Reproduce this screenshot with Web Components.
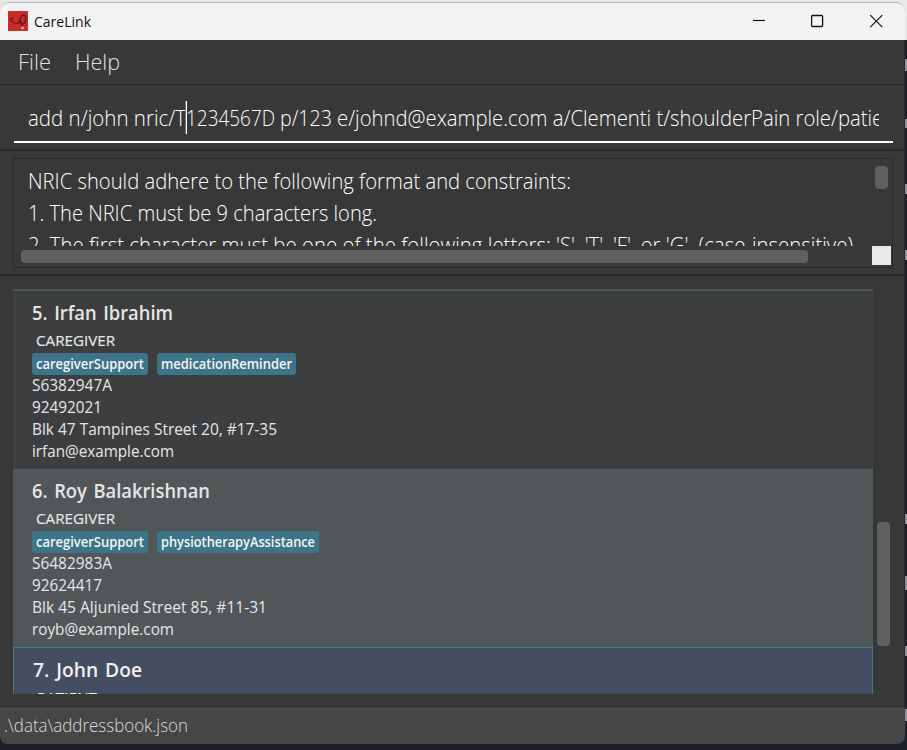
<!DOCTYPE html>
<html lang="en">
<head>
<meta charset="utf-8">
<title>CareLink</title>
<style>
html,body{margin:0;height:100%;overflow:hidden;background:#1d2028}
body{font-family:"Open Sans","Noto Sans",sans-serif;color:#fff}
</style>
</head>
<body>
<care-window></care-window>
<script>
const define = (name, html, setup) => {
  const t = document.createElement('template');
  t.innerHTML = html;
  customElements.define(name, class extends HTMLElement {
    constructor() { super(); this.attachShadow({mode:'open'}).append(t.content.cloneNode(true)); }
    connectedCallback() { if (setup) setup(this, this.shadowRoot); }
  });
};

/* Single line of text condensed or widened to a given width */
define('fit-text', `<style>
:host{display:block;white-space:pre;flex:none}
span{display:inline-block;transform-origin:0 50%}
</style><span><slot></slot></span>`, (el, root) => {
  const w = +el.getAttribute('w');
  el.style.width = w + 'px';
  const s = root.querySelector('span');
  s.style.transform = `scaleX(${w / s.getBoundingClientRect().width})`;
});

define('title-bar', `<style>
:host{display:flex;align-items:center;height:37px;background:#f3f3f3;color:#111;font-size:14.6px;padding-left:8px;border-top:1px solid #b5b5b5;border-radius:9px 9px 0 0;}
.logo{margin:-1px 6px 0 0;display:block}
.buttons{display:flex;margin-left:auto;padding-right:0}
.buttons svg{display:block;width:58.5px;height:37px}
fit-text{line-height:34px;height:36px}
</style>
<svg class="logo" width="20" height="20" viewBox="0 0 20 20"><rect width="20" height="20" fill="#c92b2b"/><path d="M2.5 7.5c.5 3 4 5 6.500 5c3-.5 3-3 3.500-5.500c.8-3 4-4 5-1.500c1 3-.5 7-3 7.500c-2.500-.5-3-4-1.500-6.500M2.500 8l3-1M11.500 11l3 4" fill="none" stroke="#5c171b" stroke-width="1.200"/><circle cx="14.500" cy="17" r="1.400" fill="#c9a6a4"/></svg>
<fit-text w="57">CareLink</fit-text>
<div class="buttons">
<svg viewBox="0 0 58.5 37"><path d="M23 17.500h12" stroke="#111" stroke-width="1.200"/></svg>
<svg viewBox="0 0 58.5 37"><rect x="23.600" y="12.500" width="11" height="11" rx="1" fill="none" stroke="#111" stroke-width="1.300"/></svg>
<svg viewBox="0 0 58.5 37"><path d="M23.300 12.200l12 12m0-12l-12 12" stroke="#111" stroke-width="1.200"/></svg>
</div>`);

define('menu-bar', `<style>
:host{display:flex;height:44px;box-sizing:border-box;gap:24px;padding-left:18px;line-height:43px;font-size:21.7px;font-weight:300;color:#e2e2e2}
</style><fit-text w="33">File</fit-text><fit-text w="45">Help</fit-text>`);

define('command-box', `<style>
:host{display:block;position:relative;height:65px;box-sizing:border-box;border-top:1px solid #2b2b2b;padding:9px 11px 0 14px}
.field{height:47px;border-bottom:2px solid;border-image:linear-gradient(#8b8b8b 50%,#fff 50%) 2;padding:0 14px 0 14px}
.clip{display:flex;overflow:hidden;height:47px;line-height:47px;font-size:21.7px;font-weight:300}
.caret{position:absolute;left:185px;top:16px;width:2px;height:33px;background:linear-gradient(90deg,#777 50%,#fff 50%)}
</style>
<div class="field"><div class="clip"><fit-text w="158">add n/john nric/T</fit-text><fit-text w="94">1234567D </fit-text><fit-text w="57">p/123 </fit-text><fit-text w="565">e/johnd@example.com a/Clementi t/shoulderPain role/patient</fit-text></div></div><div class="caret"></div>`);

define('result-box', `<style>
:host{display:block;height:125px;box-sizing:border-box;border-top:2px solid #2b2b2b;padding:7px 11px 0 13px;}
.frame{box-sizing:border-box;height:110px;border:1px solid #2b2b2b;display:grid;grid-template-columns:858px 1fr;grid-template-rows:87px 1fr}
.text{overflow:hidden;padding:6px 0 0 14px;font-size:21.7px;font-weight:300;line-height:32px;box-sizing:border-box}
.v{width:13px;height:23px;border-radius:4px;background:#606060;margin:7px 0 0 3px}
.h{width:787px;height:13px;border-radius:4px;background:#606060;margin:4px 0 0 7px}
.corner{width:19px;height:19px;background:#e8e8e8}
</style>
<div class="frame"><div class="text"><fit-text w="543">NRIC should adhere to the following format and constraints:</fit-text><fit-text w="349">1. The NRIC must be 9 characters long.</fit-text><fit-text w="825">2. The first character must be one of the following letters: 'S', 'T', 'F', or 'G'. (case-insensitive)</fit-text></div><div class="v"></div><div class="h"></div><div class="corner"></div></div>`);

define('tag-chip', `<style>
:host{display:block;box-sizing:border-box;height:22px;line-height:21px;padding:0 4px;border-radius:3px;background:#3e7489;color:#f4f4f4;font-size:13.8px;font-weight:600}
</style><slot></slot>`);

define('person-card', `<style>
:host{display:block;box-sizing:border-box;height:178px;padding:7px 0 0 19px;background:#3c3e3f;color:#e6e6e6;font-size:15.8px;line-height:22px}
:host([alt]){background:#515658}
:host([first]){height:180px;border-top:2px solid #4e5557}
:host([selected]){background:#444e60;border:1px solid #3e7b91;color:#f0f0f0}
.name{font-size:19.6px;font-weight:600;line-height:30px;height:32px;word-spacing:2px}
.role{font-size:15.3px;padding-left:4px;height:23px;line-height:21px;-webkit-text-stroke:.2px}
.tags{display:flex;gap:9px;height:21px}
</style>
<div class="name"><slot name="name"></slot></div><div class="role"><slot name="role"></slot></div><div class="tags"><slot name="tag"></slot></div><slot></slot>`);

define('person-list', `<style>
:host{display:flex;height:432px;box-sizing:border-box;border-top:2px solid #2b2b2b;padding:13px 0 0 13px}
.list{width:860px;height:405px;overflow:hidden}
.thumb{width:13px;height:124px;border-radius:4px;background:#606060;margin:233px 0 0 4px}
</style>
<div class="list">
<person-card first><fit-text slot="name" w="141">5. Irfan Ibrahim</fit-text><fit-text slot="role" w="79">CAREGIVER</fit-text><tag-chip slot="tag"><fit-text w="108">caregiverSupport</fit-text></tag-chip><tag-chip slot="tag"><fit-text w="131">medicationReminder</fit-text></tag-chip><fit-text w="80">S6382947A</fit-text><fit-text w="70">92492021</fit-text><fit-text w="245">Blk 47 Tampines Street 20, #17-35</fit-text><fit-text w="142">irfan@example.com</fit-text></person-card>
<person-card alt><fit-text slot="name" w="178">6. Roy Balakrishnan</fit-text><fit-text slot="role" w="79">CAREGIVER</fit-text><tag-chip slot="tag"><fit-text w="108">caregiverSupport</fit-text></tag-chip><tag-chip slot="tag"><fit-text w="154">physiotherapyAssistance</fit-text></tag-chip><fit-text w="80">S6482983A</fit-text><fit-text w="70">92624417</fit-text><fit-text w="235">Blk 45 Aljunied Street 85, #11-31</fit-text><fit-text w="142">royb@example.com</fit-text></person-card>
<person-card selected><fit-text slot="name" w="109">7. John Doe</fit-text><fit-text slot="role" w="60">PATIENT</fit-text></person-card>
</div><div class="thumb"></div>`);

define('status-bar', `<style>
:host{display:block;height:38px;box-sizing:border-box;background:#464646;border-top:1px solid #2b2b2b;padding-left:4px;border-radius:0 0 8px 8px;font-size:18px;font-weight:300;line-height:37px;color:#dcdcdc}
</style><fit-text w="184">.\\data\\addressbook.json</fit-text>`);

/* Sliver of the desktop visible to the right of the window */
define('desktop-edge', `<style>
:host{display:block;width:2px;height:750px;background:linear-gradient(#e8e8e8 40px,#1d2028 40px);position:relative}
i{position:absolute;left:0;width:2px;background:#8f9196}
</style><i style="top:59px;height:12px"></i><i style="top:119px;height:9px"></i><i style="top:184px;height:10px"></i><i style="top:250px;height:10px"></i><i style="top:514px;height:10px"></i><i style="top:576px;height:14px"></i><i style="top:646px;height:10px"></i><i style="top:709px;height:12px"></i>`);

define('care-window', `<style>
:host{display:flex;width:907px;height:750px;background:linear-gradient(#e8e8e8 40px,#1d2028 40px)}
.win{width:905px;height:742px;margin-top:2px;display:flex;flex-direction:column}
.body{background:#383838;width:904px;border-right:1px solid #2b2b2b}
desktop-edge{flex:none}
</style>
<div class="win"><title-bar></title-bar><div class="body"><menu-bar></menu-bar><command-box></command-box><result-box></result-box><person-list></person-list></div><status-bar></status-bar></div><desktop-edge></desktop-edge>`);
</script>
</body>
</html>
